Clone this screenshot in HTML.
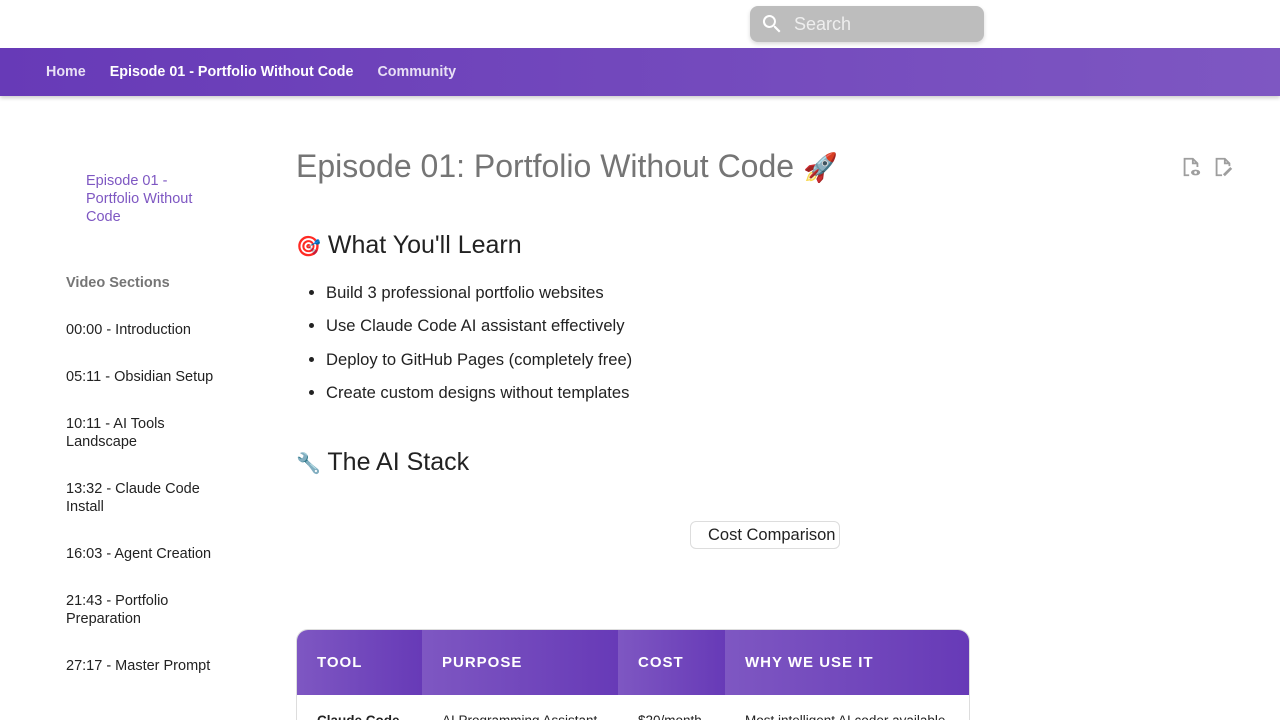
<!DOCTYPE html>
<html><head><meta charset="utf-8"><style>
*{box-sizing:border-box;margin:0;padding:0}
html,body{width:1280px;height:720px;overflow:hidden}
body{background:#fff;font-family:"Liberation Sans","DejaVu Sans",sans-serif;color:#222;position:relative}
.top{height:48px;background:#fff;position:relative}
.search{position:absolute;left:750px;top:6px;width:234px;height:36px;border-radius:8px;background:#bdbdbd;box-shadow:0 2px 4px rgba(0,0,0,.15);color:#eee;font-size:18px;line-height:36px;padding-left:44px}
.search svg{position:absolute;left:10px;top:6px}
.nav{height:48px;background:linear-gradient(90deg,#673ab7,#7e57c2);box-shadow:0 2px 4px rgba(0,0,0,.2);display:flex;align-items:center;padding-left:46px;font-size:14.3px;font-weight:bold;color:#e8e0f5}
.nav span{margin-right:24px}
.side{position:absolute;left:66px;top:0;font-size:14.5px}
.side div{position:absolute;width:165px;line-height:18px}
h1{position:absolute;left:296px;top:148px;font-size:32px;font-weight:normal;color:#757575;white-space:nowrap}
h1 .e{font-size:28px}
h2{position:absolute;left:296px;font-size:25px;font-weight:normal;color:#222;white-space:nowrap}
h2 .e{font-size:20px}
ul{position:absolute;left:326px;top:283px;font-size:16.6px;list-style:disc}
ul li{height:33.4px;line-height:20px}
.img{position:absolute;left:690px;top:521px;width:150px;height:28px;border:1px solid #ddd;border-radius:6px;font-size:16.5px;line-height:26px;padding-left:17px}
table{position:absolute;left:296px;top:629px;width:674px;border-collapse:separate;border-spacing:0;border:1px solid #ddd;border-radius:12px;overflow:hidden;font-size:13.5px}
th{height:65px;text-align:left;padding-left:20px;color:#fff;font-size:15px;letter-spacing:1px;background:linear-gradient(90deg,#7e57c2,#673ab7)}
td{height:60px;padding-left:20px;vertical-align:top;padding-top:18px}
</style></head><body>
<div class="top"><div class="search"><svg width="24" height="24" viewBox="0 0 24 24"><path fill="#fff" d="M15.5 14h-.8l-.3-.3A6.5 6.5 0 1 0 9.5 16a6.5 6.5 0 0 0 4.2-1.6l.3.3v.8l5 5 1.5-1.5-5-5zm-6 0A4.5 4.5 0 1 1 14 9.5 4.5 4.5 0 0 1 9.5 14z"/></svg>Search</div></div>
<div class="nav"><span>Home</span><span style="color:#fff">Episode 01 - Portfolio Without Code</span><span>Community</span></div>
<div class="side">
<div style="left:20px;top:172px;width:130px;color:#7e57c2">Episode 01 - Portfolio Without Code</div>
<div style="top:274px;font-weight:bold;color:#757575">Video Sections</div>
<div style="top:321px">00:00 - Introduction</div>
<div style="top:368px">05:11 - Obsidian Setup</div>
<div style="top:415px;width:120px">10:11 - AI Tools Landscape</div>
<div style="top:480px;width:150px">13:32 - Claude Code Install</div>
<div style="top:545px">16:03 - Agent Creation</div>
<div style="top:592px;width:120px">21:43 - Portfolio Preparation</div>
<div style="top:657px">27:17 - Master Prompt</div>
</div>
<h1>Episode 01: Portfolio Without Code <span class="e">🚀</span></h1>
<svg style="position:absolute;left:1180px;top:156px" width="22" height="22" viewBox="0 0 24 24"><path fill="none" stroke="#9e9e9e" stroke-width="2" d="M10 21H5V3h9l5 5v4M14 3v5h5"/><ellipse cx="17" cy="18" rx="5" ry="3.2" fill="#9e9e9e"/><circle cx="17" cy="18" r="1.5" fill="#fff"/></svg>
<svg style="position:absolute;left:1212px;top:156px" width="22" height="22" viewBox="0 0 24 24"><path fill="none" stroke="#9e9e9e" stroke-width="2" d="M11 21H5V3h9l5 5v3M14 3v5h5"/><path stroke="#9e9e9e" stroke-width="3" d="M13 21l8-8"/></svg>
<h2 style="top:231px"><span class="e">🎯</span> What You'll Learn</h2>
<ul><li>Build 3 professional portfolio websites</li><li>Use Claude Code AI assistant effectively</li><li>Deploy to GitHub Pages (completely free)</li><li>Create custom designs without templates</li></ul>
<h2 style="top:448px"><span class="e">🔧</span> The AI Stack</h2>
<div class="img">Cost Comparison</div>
<table><tr><th style="width:125px">TOOL</th><th style="width:196px">PURPOSE</th><th style="width:107px">COST</th><th>WHY WE USE IT</th></tr>
<tr><td><b>Claude Code</b></td><td>AI Programming Assistant</td><td>$20/month</td><td>Most intelligent AI coder available</td></tr></table>
</body></html>
